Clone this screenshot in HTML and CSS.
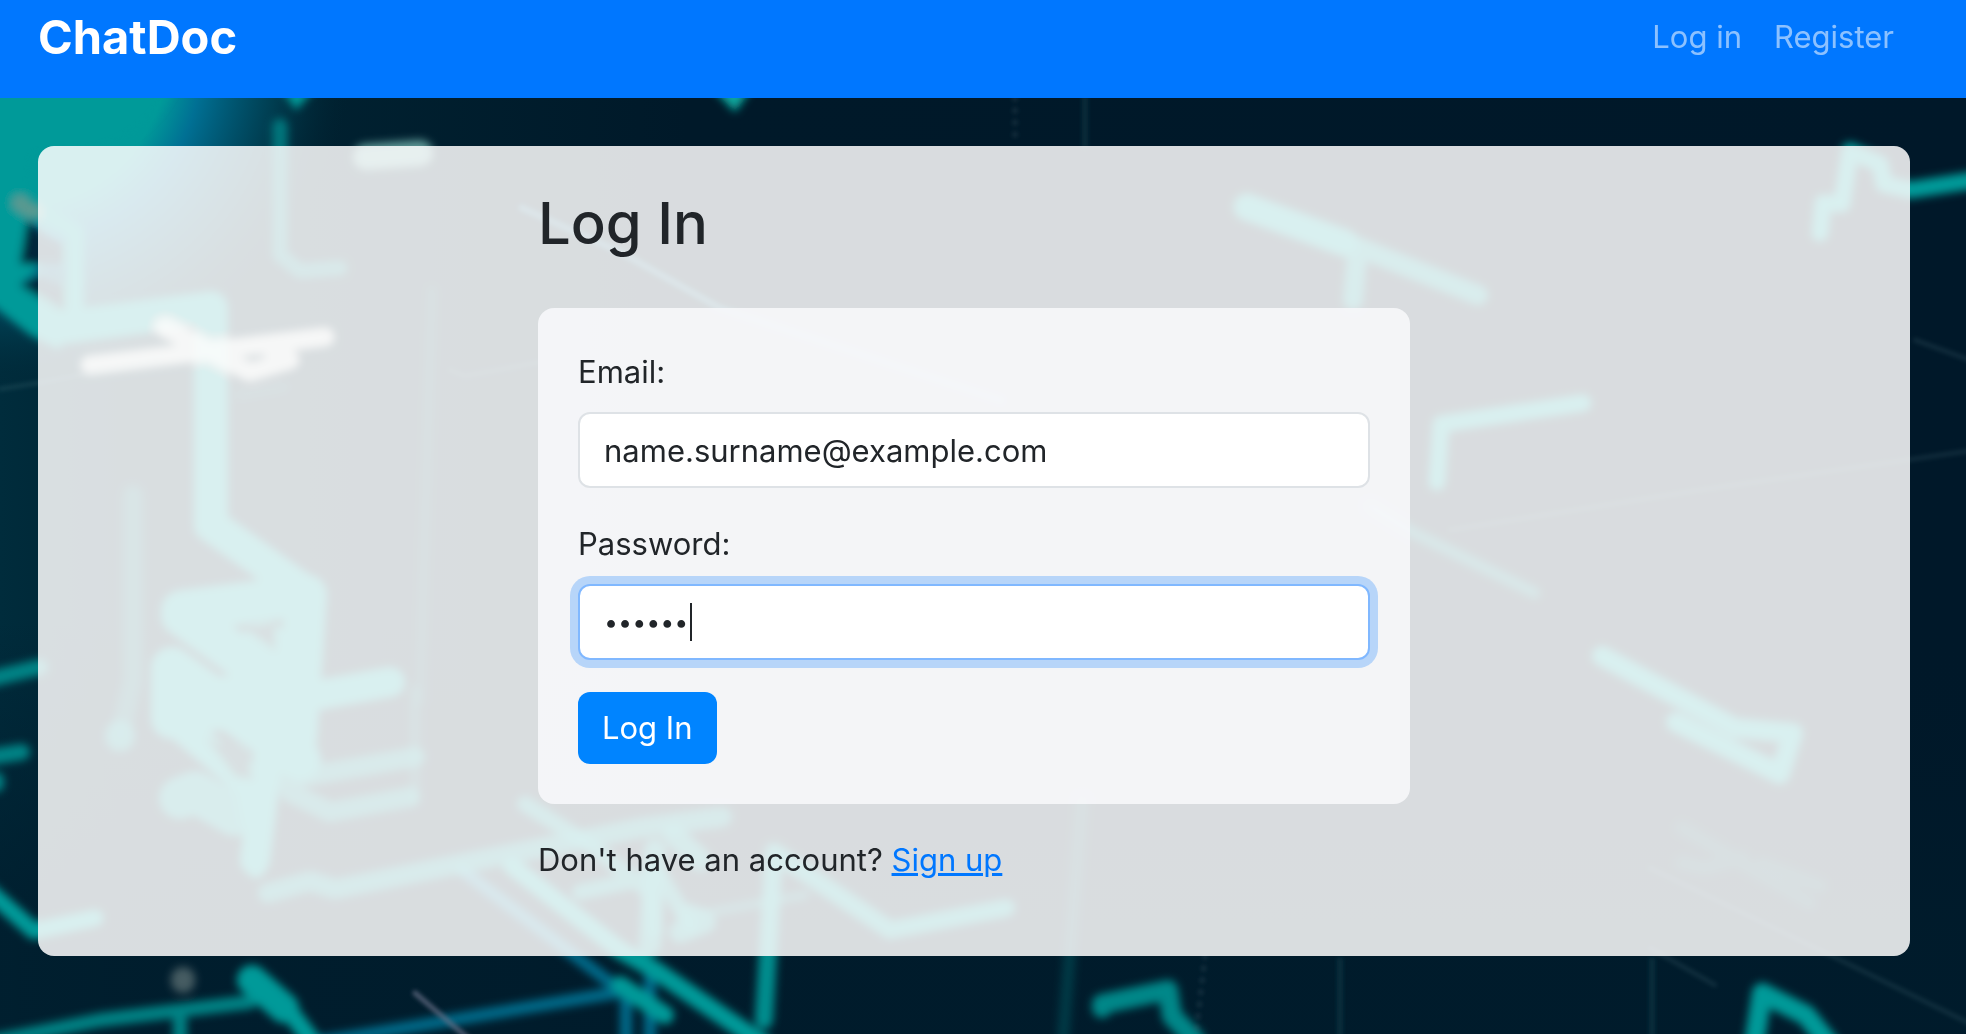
FILE: index.html
```html
<!DOCTYPE html>
<html lang="en">
<head>
  <meta charset="utf-8">
  <meta name="viewport" content="width=device-width, initial-scale=1">
  <title>ChatDoc - Log In</title>
  <link rel="stylesheet" href="styles.css">
</head>
<body>
  <svg class="backdrop" viewBox="0 0 1966 1034" preserveAspectRatio="xMidYMid slice" aria-hidden="true">
    <defs>
      <linearGradient id="night" x1="0" x2="1">
        <stop offset="0" stop-color="#002c3c"/>
        <stop offset="0.06" stop-color="#002534"/>
        <stop offset="0.35" stop-color="#001929"/>
        <stop offset="1" stop-color="#001829"/>
      </linearGradient>
      <linearGradient id="dusk" x1="0" x2="0" y1="0" y2="1">
        <stop offset="0.6" stop-color="#001829" stop-opacity="0"/>
        <stop offset="0.9" stop-color="#001c2c" stop-opacity="0.8"/>
      </linearGradient>
      <radialGradient id="glow" gradientUnits="userSpaceOnUse" cx="20" cy="60" r="330">
        <stop offset="0" stop-color="#009999"/>
        <stop offset="0.44" stop-color="#009999"/>
        <stop offset="0.55" stop-color="#007094"/>
        <stop offset="0.78" stop-color="#004458" stop-opacity="0.8"/>
        <stop offset="1" stop-color="#002534" stop-opacity="0"/>
      </radialGradient>
      <filter id="soft" filterUnits="userSpaceOnUse" x="-40" y="-40" width="2050" height="1120"><feGaussianBlur stdDeviation="4"/></filter>
      <filter id="faint" filterUnits="userSpaceOnUse" x="-40" y="-40" width="2050" height="1120"><feGaussianBlur stdDeviation="2"/></filter>
    </defs>
    <rect width="1966" height="1034" fill="url(#night)"/>
    <rect width="1966" height="1034" fill="url(#dusk)"/>
    <rect width="400" height="420" fill="url(#glow)"/>
    <g filter="url(#soft)" fill="none" stroke="#009a99" stroke-linecap="round" stroke-linejoin="round">
      <path fill="#009a99" stroke="none" d="M-20 90H172Q145 140 90 152L34 156 28 225 20 260 40 268 20 285 62 312 60 350 30 335-20 295Z"/>
      <path fill="#00273a" stroke="none" d="M27 220 45 235 64 245V264H20ZM20 285 40 277 66 288V312Z"/>
      <path stroke-width="18" d="M40 210 75 232V320"/>
      <path stroke-width="34" d="M55 328 211 308V525L305 592"/>
      <path stroke-width="42" d="M306 595 296 740M182 611 300 596M182 615 285 690M172 668 300 760M177 700H290M172 675V718"/>
      <path stroke-width="54" d="M188 705 280 700 285 740M265 650 280 680"/>
      <path stroke-width="30" d="M290 700 390 682M185 730 250 785 256 820M270 740 255 860"/>
      <path fill="#003040" stroke="none" d="M242 628 276 622V652ZM205 738 245 750 254 780 235 778Z"/>
      <path stroke-width="42" stroke-opacity="0.85" d="M180 798 195 792 235 815"/>
      <path stroke-width="20" d="M256 840 256 868"/>
      <path stroke-width="20" stroke-opacity="0.7" d="M285 780 415 757M290 792 330 812 410 797"/>
      <path stroke-width="10" stroke-opacity="0.3" d="M415 690V800"/>
      <path stroke-width="20" stroke-opacity="0.38" d="M133 495V680L120 735"/>
      <path stroke-width="30" stroke-opacity="0.7" d="M120 735V737"/>
      <path stroke-width="15" stroke-opacity="0.65" d="M280 126V255L300 271 340 268"/>
      <path stroke="#7cc0b8" stroke-width="26" stroke-opacity="0.75" d="M366 157 420 153"/>
      <path fill="#009a99" stroke="none" d="M282 90H314L296 110Z"/>
      <path fill="#10a79f" stroke="none" d="M712 88H752L735 112Z"/>
      <path stroke="#5a9990" stroke-width="16" d="M20 203 34 212"/>
      <path stroke-width="10" stroke-opacity="0.2" d="M240 395 285 387M432 290 420 700"/>
      <path stroke-width="16" stroke-opacity="0.8" d="M-10 679 40 667M-10 757 22 752M-4 780V784"/>
      <path stroke-width="17" d="M-10 892 34 931 95 918"/>
      <path stroke-width="14" stroke-opacity="0.8" d="M-10 1042 100 1020 250 1002M180 1020V1040"/>
      <path stroke-width="30" d="M252 980 284 1008"/>
      <path stroke-width="18" d="M284 1004 315 1045"/>
      <path stroke="#007da0" stroke-width="12" stroke-opacity="0.8" d="M320 1042 620 992M462 870 620 990M626 985V1040M650 975V1040"/>
      <path stroke-width="20" stroke-opacity="0.75" d="M268 893 310 881 335 889 450 866 510 854 640 828 722 817"/>
      <path stroke-width="18" d="M512 866 620 950 655 970 765 1045M620 985 665 1015"/>
      <path stroke-width="16" stroke-opacity="0.8" d="M525 804 590 845 650 892 655 930M580 892 660 875 690 925"/>
      <path stroke-width="22" stroke-opacity="0.8" d="M674 835 700 860M690 915 705 922 680 932M655 850 650 945"/>
      <path stroke-width="9" stroke-opacity="0.5" d="M700 914 805 895"/>
      <path stroke-width="18" stroke-opacity="0.9" d="M774 852 764 1020M774 852 890 930 1006 908"/>
      <path stroke-width="12" stroke-opacity="0.24" d="M1082 800 1063 1040"/>
      <path stroke-width="20" stroke-opacity="0.85" d="M1102 1004 1168 990 1172 1016 1195 1040M1102 1004V1008"/>
      <path stroke-width="27" d="M1247 207 1345 243"/>
      <path stroke-width="20" stroke-opacity="0.85" d="M1330 236 1478 295M1357 255 1353 300"/>
      <path stroke-width="17" d="M1850 151 1842 204 1823 203 1820 233M1850 151 1880 164 1884 184 1910 190 1975 180"/>
      <path stroke-width="17" d="M1437 482 1441 424 1583 403"/>
      <path stroke-width="11" stroke-opacity="0.6" d="M1370 506 1410 531 1535 593"/>
      <path stroke-width="20" d="M1602 656 1735 728 1793 733 1780 774 1676 722"/>
      <path stroke-width="14" stroke-opacity="0.2" d="M1682 863 1705 868 1742 858M1682 828 1810 903M1762 864 1820 886"/>
      <path stroke-width="20" d="M1754 1045 1762 993 1806 1015 1830 1045"/>
      <path stroke="#f4f2ee" stroke-opacity="0.8" stroke-width="19" d="M90 365 325 337M165 328 250 372 290 360 270 348"/>
      <path stroke="#8c9a96" stroke-opacity="0.5" stroke-width="24" d="M183 979V981"/>
    </g>
    <g filter="url(#faint)" fill="none" stroke="#2c8aa8" stroke-linecap="round">
      <path stroke-width="7" stroke-opacity="0.5" d="M522 208 620 252 720 308 1000 400"/>
      <path stroke="#6a6f88" stroke-width="5" stroke-opacity="0.7" d="M415 993 470 1040"/>
      <path stroke="#7fb0b5" stroke-width="4" stroke-opacity="0.14" d="M0 389 38 383 160 360M450 370 465 376 540 362M1450 530 1700 490 1975 450M1650 868 1830 955 1975 1026M1650 948 1715 985M1915 340 1975 362"/>
      <path stroke="#1a6470" stroke-width="6" stroke-opacity="0.25" d="M1340 960V1040M1652 960V1040M1085 98V146"/>
      <path stroke="#4a6474" stroke-width="5" stroke-dasharray="1 11" stroke-opacity="0.3" d="M1015 98V146M1205 956 1196 1034"/>
    </g>
  </svg>

  <header class="navbar">
    <a class="brand" href="#">ChatDoc</a>
    <nav class="nav-links" aria-label="Account">
      <a href="#login">Log in</a>
      <a href="#register">Register</a>
    </nav>
  </header>

  <main class="panel">
    <div class="content">
      <h1>Log In</h1>
      <form class="card" id="login">
        <div class="field">
          <label for="email">Email:</label>
          <input type="email" id="email" name="email" value="name.surname@example.com">
        </div>
        <div class="field">
          <label for="password">Password:</label>
          <div class="control">
            <input class="active" type="password" id="password" name="password" value="secret">
            <span class="caret" aria-hidden="true"></span>
          </div>
        </div>
        <button type="submit">Log In</button>
      </form>
      <p class="signup">Don't have an account? <a href="#register">Sign up</a></p>
    </div>
  </main>
</body>
</html>
```

FILE: styles.css
```css
* {
  box-sizing: border-box;
}

body {
  margin: 0;
  min-height: 100vh;
  background: #001829;
  color: #212529;
  font: 400 31px/48px Inter, "Liberation Sans", sans-serif;
}

.backdrop {
  position: fixed;
  inset: 0;
  z-index: -1;
  width: 100%;
  height: 100%;
}

.navbar {
  display: flex;
  justify-content: space-between;
  align-items: center;
  height: 98px;
  padding: 0 72px 24px 38px;
  background: #0077ff;
}

.brand {
  color: #fff;
  font-size: 47px;
  font-weight: 700;
  text-decoration: none;
}

.nav-links {
  display: flex;
  gap: 32px;
}

.nav-links a {
  color: rgba(255, 255, 255, 0.55);
  text-decoration: none;
}

.panel {
  margin: 48px 56px 48px 38px;
  padding: 40px;
  border-radius: 16px;
  background: rgba(255, 255, 255, 0.85);
}

.content {
  max-width: 872px;
  margin: 0 auto;
}

h1 {
  margin: 0 0 48px;
  font-size: 58px;
  font-weight: 500;
  line-height: 74px;
}

.card {
  display: flex;
  flex-direction: column;
  align-items: flex-start;
  gap: 32px;
  padding: 40px;
  border-radius: 16px;
  background: rgba(248, 249, 251, 0.85);
}

.field {
  display: flex;
  flex-direction: column;
  gap: 16px;
  width: 100%;
}

.control {
  position: relative;
}

input {
  display: block;
  width: 100%;
  height: 76px;
  padding: 12px 24px;
  border: 2px solid #dee2e6;
  border-radius: 12px;
  outline: 0;
  background: #fff;
  color: #212529;
  font: inherit;
}

input[type="password"] {
  font-size: 25px;
}

input.active,
input:focus {
  border-color: #80b8ff;
  box-shadow: 0 0 0 8px rgba(0, 119, 255, 0.25);
}

.caret {
  position: absolute;
  top: 19px;
  left: 112px;
  width: 2px;
  height: 38px;
  background: #212529;
}

button {
  height: 72px;
  padding: 0 24px;
  border: 0;
  border-radius: 12px;
  background: #0084ff;
  color: #fff;
  font: inherit;
}

.signup {
  margin: 32px 0;
}

.signup a {
  color: #0077ff;
}
```
